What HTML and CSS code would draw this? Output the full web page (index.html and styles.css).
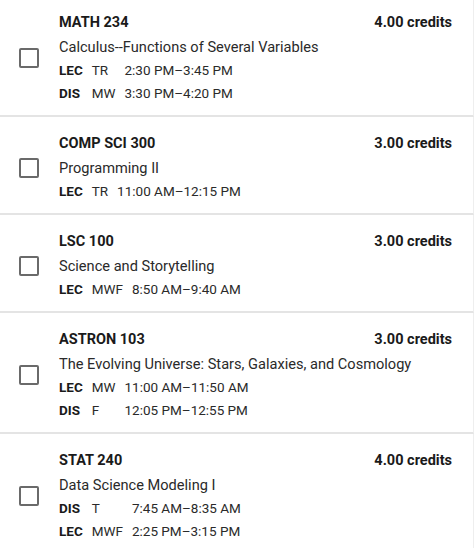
FILE: index.html
```html
<!DOCTYPE html>
<html>
<head>
<meta charset="utf-8">
<link rel="stylesheet" href="styles.css">
</head>
<body>
<div class="list">
  <div class="card first">
    <span class="check"></span>
    <div class="info">
      <div class="head"><span class="code">MATH 234</span><span class="credits">4.00 credits</span></div>
      <div class="name">Calculus--Functions of Several Variables</div>
      <div class="sched">
        <span class="type">LEC</span><span class="days">TR</span><span class="time">2:30 PM–3:45 PM</span>
        <span class="type">DIS</span><span class="days">MW</span><span class="time">3:30 PM–4:20 PM</span>
      </div>
    </div>
  </div>
  <div class="card">
    <span class="check"></span>
    <div class="info">
      <div class="head"><span class="code">COMP SCI 300</span><span class="credits">3.00 credits</span></div>
      <div class="name">Programming II</div>
      <div class="sched">
        <span class="type">LEC</span><span class="days">TR</span><span class="time">11:00 AM–12:15 PM</span>
      </div>
    </div>
  </div>
  <div class="card">
    <span class="check"></span>
    <div class="info">
      <div class="head"><span class="code">LSC 100</span><span class="credits">3.00 credits</span></div>
      <div class="name">Science and Storytelling</div>
      <div class="sched">
        <span class="type">LEC</span><span class="days">MWF</span><span class="time">8:50 AM–9:40 AM</span>
      </div>
    </div>
  </div>
  <div class="card">
    <span class="check"></span>
    <div class="info">
      <div class="head"><span class="code">ASTRON 103</span><span class="credits">3.00 credits</span></div>
      <div class="name">The Evolving Universe: Stars, Galaxies, and Cosmology</div>
      <div class="sched">
        <span class="type">LEC</span><span class="days">MW</span><span class="time">11:00 AM–11:50 AM</span>
        <span class="type">DIS</span><span class="days">F</span><span class="time">12:05 PM–12:55 PM</span>
      </div>
    </div>
  </div>
  <div class="card">
    <span class="check"></span>
    <div class="info">
      <div class="head"><span class="code">STAT 240</span><span class="credits">4.00 credits</span></div>
      <div class="name">Data Science Modeling I</div>
      <div class="sched">
        <span class="type">DIS</span><span class="days">T</span><span class="time">7:45 AM–8:35 AM</span>
        <span class="type">LEC</span><span class="days">MWF</span><span class="time">2:25 PM–3:15 PM</span>
      </div>
    </div>
  </div>
</div>
</body>
</html>
```
FILE: styles.css
```css
html, body {
  margin: 0;
  padding: 0;
  background: #ffffff;
}
body {
  font-family: Roboto, "Liberation Sans", sans-serif;
  color: #212121;
  overflow: hidden;
}
.list {
  display: flex;
  flex-direction: column;
}
.card {
  display: flex;
  align-items: center;
  padding: 15px 21px 10px 19px;
  border-bottom: 2px solid #e4e4e4;
  border-right: 1px solid #eeeeee;
}
.card.first {
  padding-top: 11px;
}
.check {
  flex: none;
  width: 16px;
  height: 16px;
  border: 2px solid #6a6a6a;
  border-radius: 2px;
  margin-right: 20px;
}
.info {
  flex: 1;
  display: flex;
  flex-direction: column;
}
.head {
  display: flex;
  justify-content: space-between;
  line-height: 24px;
  font-size: 14.5px;
  font-weight: 700;
  color: #1a1a1a;
}
.name {
  line-height: 24px;
  font-size: 14.6px;
  color: #2a2a2a;
}
.sched {
  display: grid;
  grid-template-columns: auto auto 1fr;
  column-gap: 9px;
  font-size: 13.5px;
  line-height: 23px;
  color: #2a2a2a;
}
.type {
  font-weight: 700;
  color: #1a1a1a;
}
```
